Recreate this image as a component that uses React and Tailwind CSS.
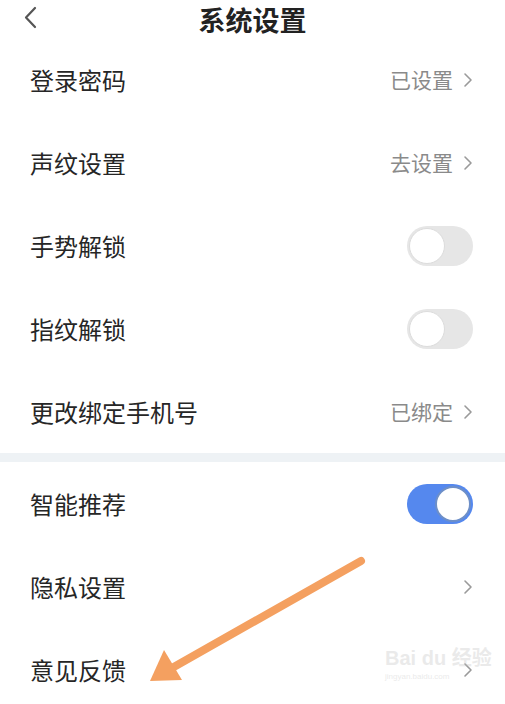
import React from "react";

const font = { fontFamily: '"Noto Sans CJK SC", "Noto Sans", sans-serif' };

function Chevron() {
  return (
    <svg width="10" height="16" viewBox="0 0 10 16" className="ml-[10px]">
      <path d="M2 2 L8 8 L2 14" fill="none" stroke="#9a9a9a" strokeWidth="1.6" strokeLinecap="round" strokeLinejoin="round" />
    </svg>
  );
}

function Toggle({ on }) {
  return on ? (
    <div className="w-[66px] h-[40px] rounded-full bg-[#5588ee] flex items-center justify-end pr-[2px]">
      <div className="w-[36px] h-[36px] rounded-full bg-white border-2 border-[#6d8fc8]" />
    </div>
  ) : (
    <div className="w-[66px] h-[40px] rounded-full bg-[#e6e6e6] flex items-center pl-[2px]">
      <div className="w-[36px] h-[36px] rounded-full bg-white border border-[#dcdcdc]" />
    </div>
  );
}

function Row({ label, value, chevron, toggle }) {
  return (
    <div className="h-[83px] flex items-center justify-between pl-[30px] pr-[32px]">
      <span className="text-[24px] text-[#262626]">{label}</span>
      <div className="flex items-center">
        {value && <span className="text-[21px] text-[#8a8a8a]">{value}</span>}
        {chevron && <Chevron />}
        {toggle !== undefined && <Toggle on={toggle} />}
      </div>
    </div>
  );
}

export default function App() {
  return (
    <div className="relative w-[505px] h-[704px] bg-white overflow-hidden" style={font}>
      <div className="h-[38px] relative flex items-start justify-center">
        <svg width="16" height="24" viewBox="0 0 16 24" className="absolute left-[22px] top-[6px]">
          <path d="M13 2 L4 11.5 L13 21" fill="none" stroke="#555" strokeWidth="2.2" strokeLinecap="round" strokeLinejoin="round" />
        </svg>
        <span className="text-[27px] leading-[40px] font-bold text-[#222] h-[38px]">系统设置</span>
      </div>
      <Row label="登录密码" value="已设置" chevron />
      <Row label="声纹设置" value="去设置" chevron />
      <Row label="手势解锁" toggle={false} />
      <Row label="指纹解锁" toggle={false} />
      <Row label="更改绑定手机号" value="已绑定" chevron />
      <div className="h-[9px] bg-[#eef2f5]" />
      <Row label="智能推荐" toggle={true} />
      <Row label="隐私设置" chevron />
      <Row label="意见反馈" chevron />

      <div className="absolute left-[385px] top-[648px] flex flex-col items-start opacity-30 pointer-events-none">
        <span className="text-[20px] font-bold text-[#bbb] leading-none" style={{ fontFamily: '"Liberation Sans", "Noto Sans CJK SC", sans-serif' }}>Bai du 经验</span>
        <span className="text-[8px] text-[#bbb] mt-[3px]" style={{ fontFamily: '"Liberation Sans", sans-serif' }}>jingyan.baidu.com</span>
      </div>

      <svg className="absolute left-0 top-0 pointer-events-none" width="505" height="704" viewBox="0 0 505 704">
        <line x1="361" y1="561" x2="172" y2="668" stroke="#f4a060" strokeWidth="8" strokeLinecap="round" />
        <polygon points="150,681 164,650 182,680" fill="#f4a060" />
      </svg>
    </div>
  );
}
